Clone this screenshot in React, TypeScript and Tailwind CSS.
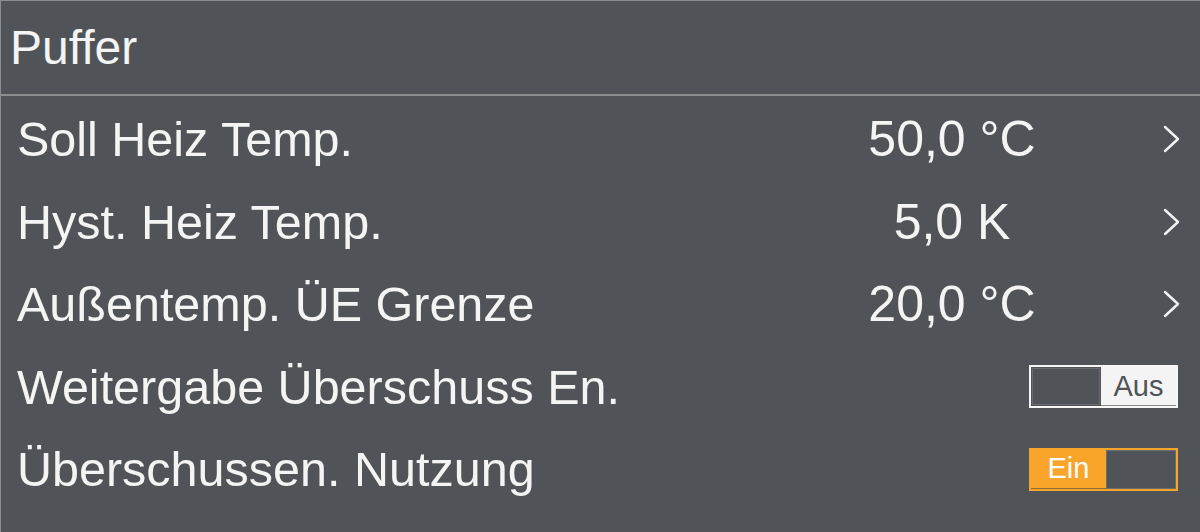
import { useState } from 'react';

type Row =
  | { kind: 'value'; label: string; value: string }
  | { kind: 'toggle'; label: string; on: boolean };

const rows: Row[] = [
  { kind: 'value', label: 'Soll Heiz Temp.', value: '50,0 °C' },
  { kind: 'value', label: 'Hyst. Heiz Temp.', value: '5,0 K' },
  { kind: 'value', label: 'Außentemp. ÜE Grenze', value: '20,0 °C' },
  { kind: 'toggle', label: 'Weitergabe Überschuss En.', on: false },
  { kind: 'toggle', label: 'Überschussen. Nutzung', on: true },
];

const Chevron = () => (
  <svg width="17" height="28" viewBox="0 0 17 28" fill="none" className="shrink-0">
    <polyline points="2,2 15,14 2,26" stroke="#f4f4f4" strokeWidth="2.4" strokeLinecap="round" strokeLinejoin="round" />
  </svg>
);

const Toggle = ({ on, onClick }: { on: boolean; onClick: () => void }) => {
  if (on) {
    return (
      <button onClick={onClick} className="mr-[2px] flex h-[43px] w-[149px] border-2 border-[#f9a52b] bg-[#f9a52b]">
        <div className="flex h-full w-[75px] items-center justify-center border-b border-[#8a6a3a] text-[29px] leading-none text-[#fdfdfd]">
          Ein
        </div>
        <div className="h-full flex-1 border border-[#6a6d70] bg-[#505458]" />
      </button>
    );
  }
  return (
    <button onClick={onClick} className="mr-[2px] flex h-[43px] w-[149px] border-2 border-[#f7f7f7] bg-[#f4f4f4]">
      <div className="h-full w-[70px] bg-[#505458] p-px">
        <div className="h-full w-full border border-[#686b6f]" />
      </div>
      <div className="flex h-full flex-1 items-center justify-center border-b border-[#8c8c8c] text-[29px] leading-none text-[#505458]">
        Aus
      </div>
    </button>
  );
};

export default function App() {
  const [toggles, setToggles] = useState<Record<number, boolean>>({ 3: false, 4: true });

  return (
    <div className="h-[532px] w-[1200px] overflow-hidden border-l border-t border-[#8a8c8e] bg-[#505458] font-['Liberation_Sans',Arial,sans-serif] text-[#f4f4f4]">
      {/* Header */}
      <div className="flex h-[95px] items-center border-b-2 border-[#8b8d8f] pl-[9px] text-[48px] leading-none">
        Puffer
      </div>

      {/* Settings list */}
      <div className="flex flex-col pt-[2px]">
        {rows.map((row, i) => (
          <div key={i} className="flex h-[82.5px] items-center pl-[16px] pr-[20px] text-[48.5px] leading-none">
            <div className="flex-1 whitespace-nowrap">{row.label}</div>
            {row.kind === 'value' ? (
              <>
                <div className="w-[240px] text-center text-[50px] whitespace-nowrap">{row.value}</div>
                <div className="w-[91px]" />
                <Chevron />
              </>
            ) : (
              <Toggle on={toggles[i]} onClick={() => setToggles({ ...toggles, [i]: !toggles[i] })} />
            )}
          </div>
        ))}
      </div>
    </div>
  );
}
